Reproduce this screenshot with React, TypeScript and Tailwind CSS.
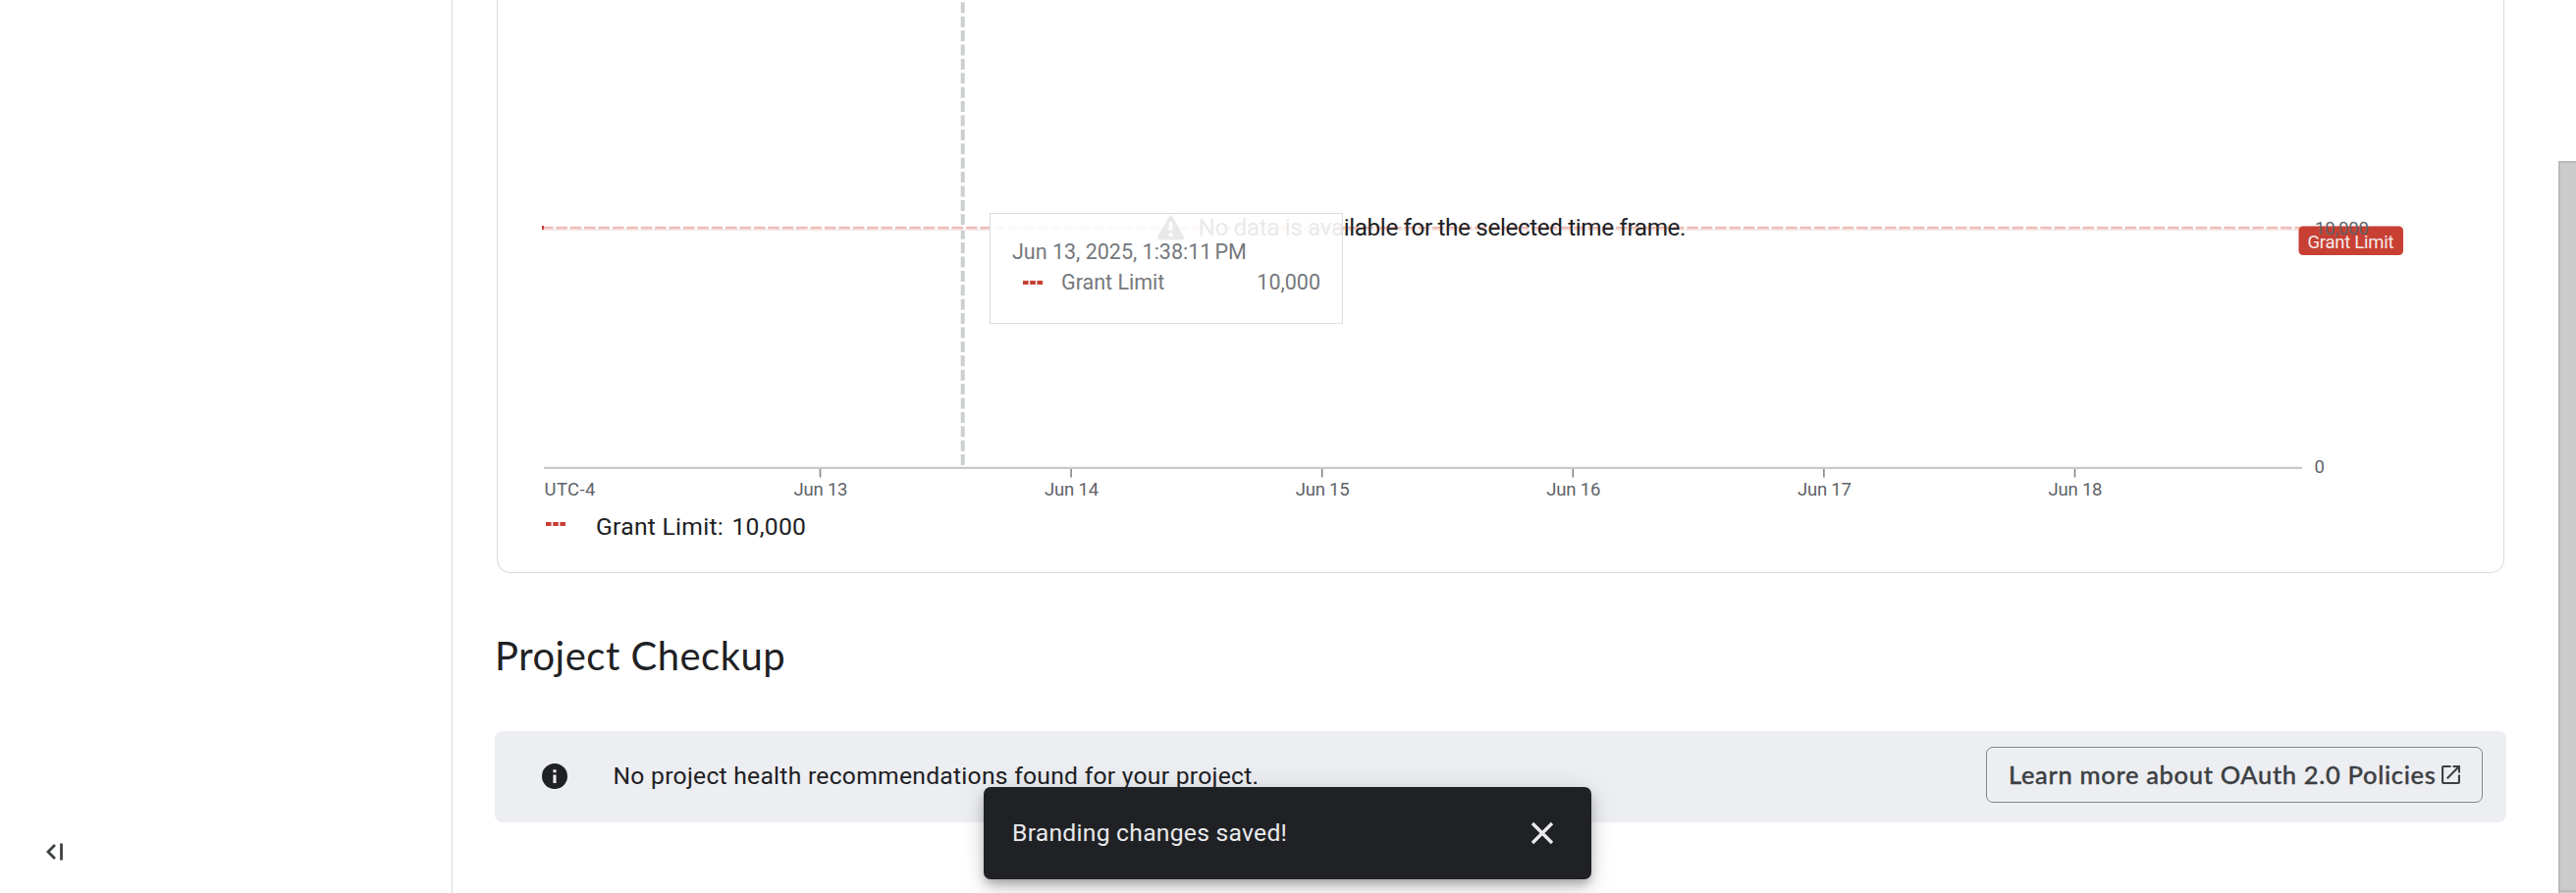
const days = [
  { label: "Jun 13", x: 835.5 },
  { label: "Jun 14", x: 1091.1 },
  { label: "Jun 15", x: 1346.7 },
  { label: "Jun 16", x: 1602.3 },
  { label: "Jun 17", x: 1857.9 },
  { label: "Jun 18", x: 2113.5 },
];

function Dashes({ className }: { className: string }) {
  return (
    <svg className={className} viewBox="0 0 20 4" preserveAspectRatio="none" fill="#c74033">
      <rect width="5.6" height="4" />
      <rect x="7.2" width="5.6" height="4" />
      <rect x="14.4" width="5.6" height="4" />
    </svg>
  );
}

function Chart() {
  return (
    <svg className="block h-[515px] w-[2043px]" viewBox="507 0 2043 515" fontSize="18.5" fill="#5f6368">
      <line x1="980.7" x2="980.7" y1="-12.1" y2="474" stroke="#cccfcf" strokeWidth="4" strokeDasharray="11 3.4" />
      <path d="M554 234H2345" stroke="#f1f1f2" strokeWidth="2" />
      <path d="M552 232.8H2345" stroke="#f6dedb" strokeWidth="4" strokeDasharray="11.4 3" />
      <path d="M552 232H2345" stroke="#edbcb6" strokeWidth="2" strokeDasharray="11.4 3" />
      <path d="M552 232h2" stroke="#c74033" strokeWidth="4" />
      <path d="M554 475.7H2345" stroke="#ececee" strokeWidth="1" />
      <path d="M554 477H2345" stroke="#c8c9cd" strokeWidth="2" />
      <text x="554.5" y="505" textLength="52">UTC-4</text>
      {days.map((d) => (
        <g key={d.label}>
          <path d={`M${d.x} 478v8.5`} stroke="#80868b" strokeWidth="1.6" />
          <text x={d.x + 0.5} y="505" textAnchor="middle" textLength="55">{d.label}</text>
        </g>
      ))}
      <rect x="2341.5" y="230.5" width="106.5" height="29.5" rx="4.5" fill="#c74033" />
      <text x="2350.5" y="253" fill="#f6e9e8" textLength="88">Grant Limit</text>
      <text x="2358" y="239" textLength="55">10,000</text>
      <text x="2357.5" y="482">0</text>
      <path d="M1192.5 222.5 1203.5 242h-22z" fill="#202124" stroke="#202124" strokeWidth="5" strokeLinejoin="round" />
      <path d="M1192.5 226v9M1192.5 237.5v3.5" stroke="#fff" strokeWidth="3.6" />
      <text x="1220.5" y="240.3" fontSize="24.3" fill="#202124" textLength="497">No data is available for the selected time frame.</text>
    </svg>
  );
}

export default function App() {
  return (
    <div className="relative flex h-[910px] w-[2624px] overflow-hidden bg-white font-['Roboto',sans-serif] text-[#202124]">
      <aside className="flex w-[461px] shrink-0 items-end border-r border-[#dadce0] pb-[33px] pl-[46px]">
        <svg className="h-[18px] w-[20px]" viewBox="0 0 20 18" fill="none" stroke="#3c4043" strokeWidth="2.8">
          <path d="M10 2 3 9l7 7M16.5.5v17" />
        </svg>
      </aside>
      <main className="flex flex-1 flex-col pl-[43px]">
        <section className="ml-[2px] h-[584px] w-[2045px] shrink-0 rounded-b-[14px] border border-t-0 border-[#dadce0]">
          <Chart />
          <div className="flex h-[40px] items-center pl-[49px] pt-[3px] text-[24.7px] tracking-[0.25px]">
            <Dashes className="mb-[6px] h-[4px] w-[20px]" />
            <span className="ml-[31px] w-[138.5px] whitespace-nowrap">Grant Limit:</span>
            <span>10,000</span>
          </div>
        </section>
        <h2 className="mt-[59px] h-[51px] font-['Lato',sans-serif] text-[40px] leading-[50px] tracking-[0.5px]">Project Checkup</h2>
        <section className="mt-[51px] flex h-[93px] w-[2049px] shrink-0 items-center rounded-[8px] bg-[#edeef2] pl-[48px] pr-[24px]">
          <svg className="mb-[1px] h-[26px] w-[26px]" viewBox="2 2 20 20" fill="#202124">
            <path d="M12 2a10 10 0 1 0 0 20 10 10 0 0 0 0-20zm1.2 15.4h-2.4v-6.6h2.4v6.6zm0-8.2h-2.4V6.8h2.4v2.4z" />
          </svg>
          <p className="mb-[2px] ml-[46.5px] flex-1 text-[24.7px] tracking-[0.25px]">No project health recommendations found for your project.</p>
          <button className="mb-[4px] flex h-[57px] w-[506px] items-center rounded-[7px] border border-[#80868b] pl-[22px] text-[#3c4043]">
            <span className="w-[441px] whitespace-nowrap text-left font-['Lato',sans-serif] text-[25.5px] font-medium tracking-[0.66px] [-webkit-text-stroke:0.35px_#3c4043]">Learn more about OAuth 2.0 Policies</span>
            <svg className="h-[19px] w-[19px]" viewBox="3 3 18 18" fill="currentColor">
              <path d="M19 19H5V5h7V3H5a2 2 0 0 0-2 2v14a2 2 0 0 0 2 2h14a2 2 0 0 0 2-2v-7h-2v7zM14 3v2h3.59l-9.83 9.83 1.41 1.41L19 6.41V10h2V3h-7z" />
            </svg>
          </button>
        </section>
      </main>
      <div className="mt-[164px] flex h-[746px] w-[18px] shrink-0 flex-col border-l-2 border-t-2 border-[#b9b9b9] bg-[#cbcbcb] pt-[741px]">
        <div className="h-[2px] bg-[#b9b9b9]" />
      </div>

      <div className="absolute left-[1008px] top-[217px] h-[113px] w-[360px] border border-[#dadce0] bg-white/90 pl-[22px] pr-[22px] pt-[23px] text-[21.5px] leading-[31px] text-[#75787c]">
        <div className="whitespace-nowrap">Jun 13, 2025, 1:38:11<span className="ml-[3px]">PM</span></div>
        <div className="flex items-center pl-[11px]">
          <Dashes className="h-[4px] w-[20px]" />
          <span className="ml-[19px] flex-1">Grant Limit</span>
          <span>10,000</span>
        </div>
      </div>

      <div className="absolute left-[1002px] top-[802px] flex h-[94px] w-[619px] items-center justify-between rounded-[7px] bg-[#202124] pl-[29px] pr-[38px] text-[24.7px] tracking-[0.25px] text-[#e8eaed] shadow-[0_5px_8px_-2px_rgba(0,0,0,0.25),0_10px_17px_rgba(0,0,0,0.14),0_2px_30px_rgba(0,0,0,0.1)]">
        <span>Branding changes saved!</span>
        <svg className="h-[24px] w-[24px]" viewBox="0 0 24 24" stroke="currentColor" strokeWidth="3.4">
          <path d="m2 2 20 20M22 2 2 22" />
        </svg>
      </div>
    </div>
  );
}
